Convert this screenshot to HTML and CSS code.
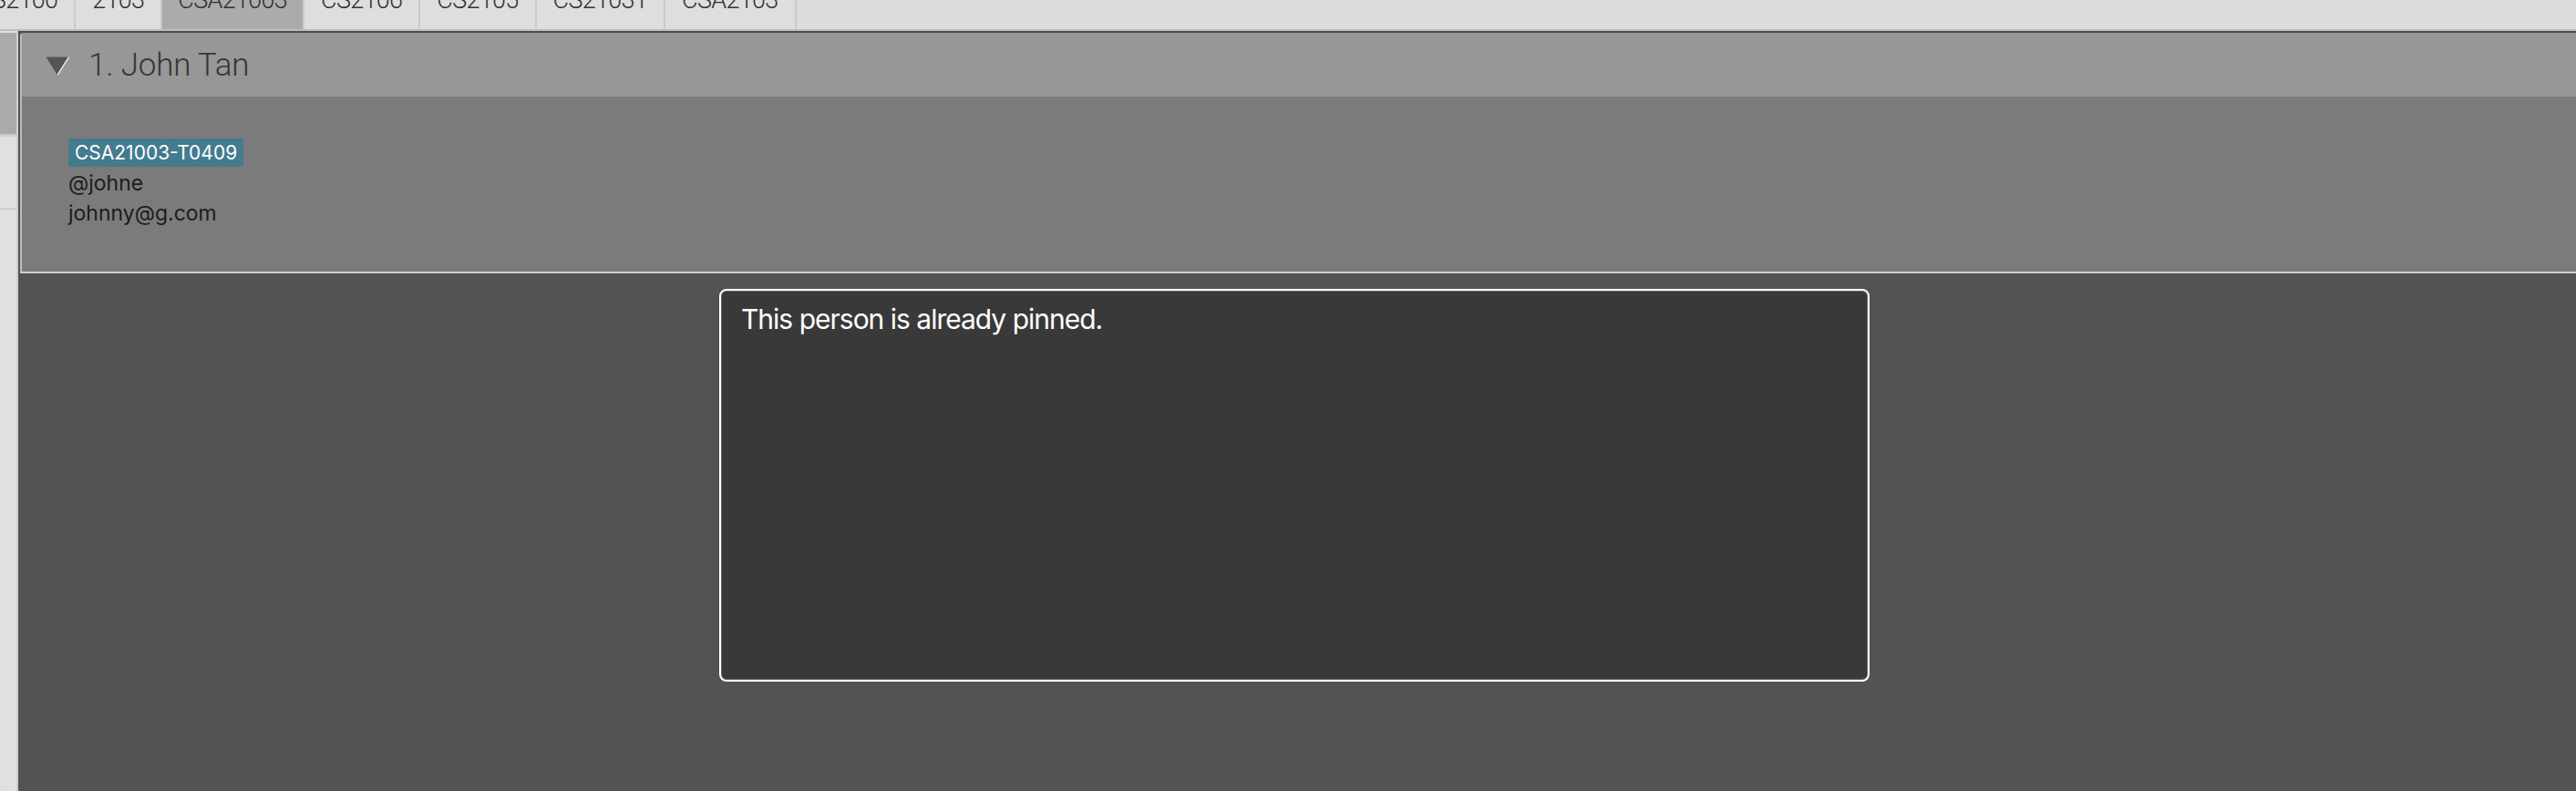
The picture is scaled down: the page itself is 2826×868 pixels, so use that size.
FILE: index.html
```html
<!DOCTYPE html>
<html>
<head>
<meta charset="utf-8">
<link rel="stylesheet" href="styles.css">
</head>
<body>
<div class="tabbar">
  <div class="tabs">
    <div class="tab first"><span>CS2100</span></div>
    <div class="tab"><span>2103</span></div>
    <div class="tab active"><span>CSA21003</span></div>
    <div class="tab"><span>CS2106</span></div>
    <div class="tab"><span>CS2105</span></div>
    <div class="tab"><span>CS21031</span></div>
    <div class="tab"><span>CSA2103</span></div>
  </div>
</div>
<div class="main">
  <div class="sidebar">
    <div class="side-item active"></div>
    <div class="side-item"></div>
    <div class="side-item"></div>
  </div>
  <div class="content">
    <div class="card">
      <div class="card-header">
        <svg class="arrow" width="26" height="21" viewBox="0 0 26 21">
          <polygon points="0.5,0.5 25.5,0.5 13,20.5" fill="#555555"/>
          <polyline points="0.5,0.5 13,20.5 25.5,0.5" fill="none" stroke="#ffffff" stroke-width="1.2" stroke-dasharray="0 24 40"/>
        </svg>
        <span class="name">1. John Tan</span>
      </div>
      <div class="card-body">
        <div class="tags"><span class="tag">CSA21003-T0409</span></div>
        <div class="line">@johne</div>
        <div class="line">johnny@g.com</div>
      </div>
    </div>
    <div class="result">
      <div class="result-text">This person is already pinned.</div>
    </div>
  </div>
</div>
</body>
</html>
```
FILE: styles.css
```css
html, body {
  margin: 0;
  padding: 0;
}
body {
  width: 2826px;
  height: 868px;
  overflow: hidden;
  background: #535353;
  font-family: Inter, "Noto Sans", sans-serif;
}
.tabbar {
  height: 32px;
  background: #dcdcdc;
  border-bottom: 2px solid #bdbdbd;
  overflow: hidden;
}
.tabs {
  display: flex;
  height: 32px;
  margin-left: -44px;
}
.tab {
  height: 32px;
  padding: 0 18px;
  border-right: 2px solid #cacaca;
  background: #dedede;
  overflow: hidden;
  font-family: Roboto, sans-serif;
  font-weight: 300;
  font-size: 27px;
  letter-spacing: -0.7px;
  color: #333333;
}
.tab span {
  display: block;
  line-height: 30px;
  margin-top: -15px;
}
.tab.active {
  background: #ababab;
  padding: 0 17px;
}
.main {
  display: flex;
  height: 834px;
}
.sidebar {
  width: 18px;
  background: #e0e0e0;
  border-right: 2px solid #d0d0d0;
  display: flex;
  flex-direction: column;
}
.side-item {
  height: 78px;
  border-top: 2px solid #d0d0d0;
}
.side-item.active {
  height: 111px;
  margin-top: 2px;
  border-top: none;
  background: #aaaaaa;
  border-bottom: 1px solid #c8c8c8;
}
.content {
  flex: 1;
  background: #535353;
  border-top: 2px solid #4d4d4d;
  display: flex;
  flex-direction: column;
}
.card {
  margin-left: 2px;
  border-left: 2px solid #bcbcbc;
  border-bottom: 2px solid #cdcdcd;
  border-top-left-radius: 4px;
  overflow: hidden;
}
.card-header {
  height: 70px;
  background: #979797;
  display: flex;
  align-items: center;
  padding-left: 26px;
}
.arrow {
  display: block;
  margin-top: 3px;
}
.name {
  margin-left: 21px;
  font-family: Roboto, sans-serif;
  font-weight: 300;
  font-size: 35px;
  letter-spacing: -0.2px;
  color: #353535;
}
.card-body {
  height: 192px;
  background: #7b7b7b;
  box-sizing: border-box;
  padding: 46px 0 0 51px;
}
.tags {
  display: flex;
  height: 31px;
  margin-bottom: 2px;
}
.tag {
  background: #437b8f;
  color: #ffffff;
  font-size: 21px;
  line-height: 31px;
  padding: 0 7px;
  border-radius: 3px;
}
.line {
  font-size: 23px;
  line-height: 33px;
  color: #1c1c1c;
}
.result {
  margin: 17px 0 0 769px;
  width: 1262px;
  height: 431px;
  box-sizing: border-box;
  background: #393939;
  border: 2px solid #ffffff;
  border-radius: 8px;
  box-shadow: inset 0 0 0 1px #666666;
  padding: 11px 22px;
}
.result-text {
  color: #ffffff;
  font-size: 30px;
  letter-spacing: -1px;
  line-height: 40px;
}
```
